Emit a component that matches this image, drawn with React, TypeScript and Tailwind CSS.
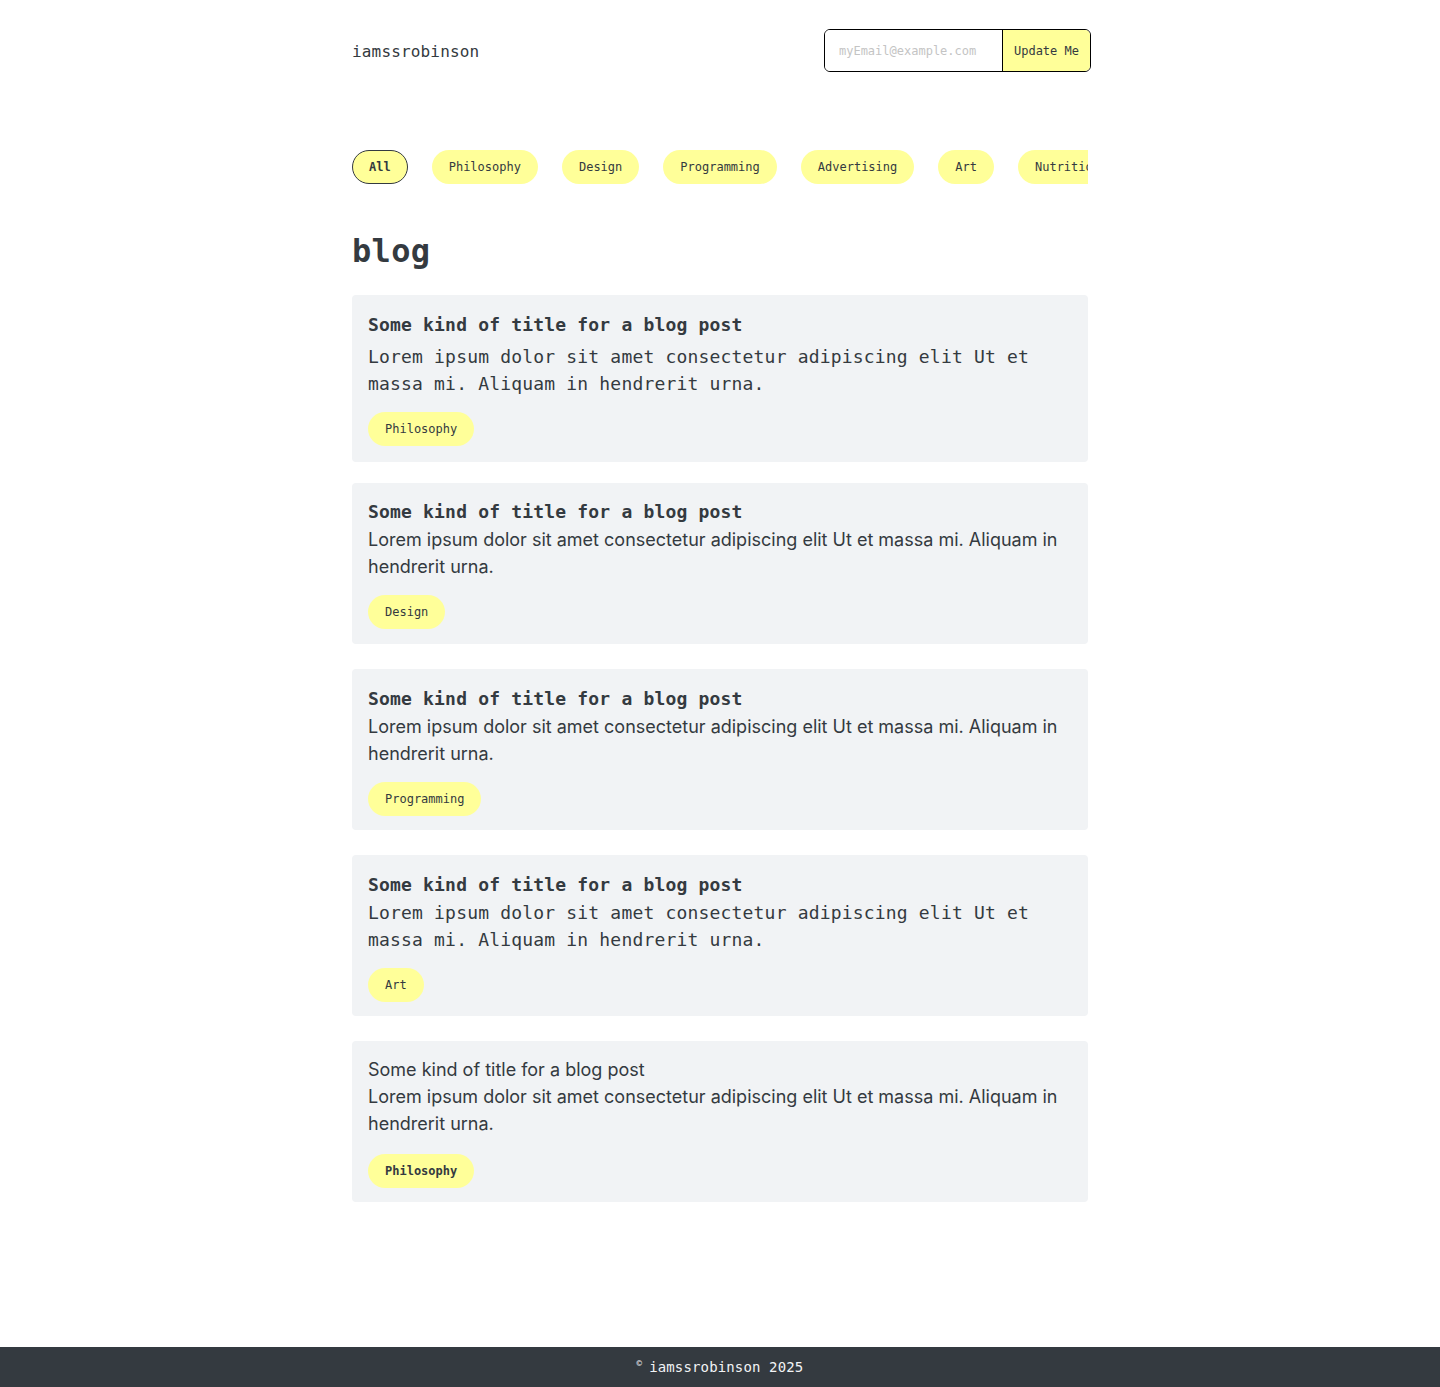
import React from 'react';

const mono = 'font-["DejaVu_Sans_Mono","Liberation_Mono",monospace] tracking-[0.01em]';
const monoTight = 'font-["DejaVu_Sans_Mono","Liberation_Mono",monospace]';
const inter = 'font-["Inter","Noto_Sans",sans-serif]';

const categories = ['All', 'Philosophy', 'Design', 'Programming', 'Advertising', 'Art', 'Nutrition'];

type Post = {
  tag: string;
  card: string;
  title: string;
  body: string;
  tagWrap: string;
  tagBold?: boolean;
};

const posts: Post[] = [
  {
    tag: 'Philosophy',
    card: 'pt-4 pb-4',
    title: `${mono} text-lg leading-7 font-bold`,
    body: `${mono} text-lg leading-[27px] mt-1`,
    tagWrap: 'mt-[15px]',
  },
  {
    tag: 'Design',
    card: 'mt-[21px] pt-[15px] pb-[15px]',
    title: `${mono} text-lg leading-7 font-bold`,
    body: `${inter} text-lg leading-[27px]`,
    tagWrap: 'mt-[15px]',
  },
  {
    tag: 'Programming',
    card: 'mt-[25px] pt-4 pb-[14px]',
    title: `${mono} text-lg leading-7 font-bold`,
    body: `${inter} text-lg leading-[27px]`,
    tagWrap: 'mt-[15px]',
  },
  {
    tag: 'Art',
    card: 'mt-[25px] pt-4 pb-[14px]',
    title: `${mono} text-lg leading-7 font-bold`,
    body: `${mono} text-lg leading-[27px]`,
    tagWrap: 'mt-[15px]',
  },
  {
    tag: 'Philosophy',
    card: 'mt-[25px] pt-[15px] pb-[14px]',
    title: `${inter} text-lg leading-[27px]`,
    body: `${inter} text-lg leading-[27px]`,
    tagWrap: 'mt-[17px]',
    tagBold: true,
  },
];

function Pill({ label, active, bold }: { label: string; active?: boolean; bold?: boolean }) {
  return (
    <span
      className={`shrink-0 inline-flex items-center rounded-full border px-4 py-2 text-xs leading-4 bg-[#ffff99] ${monoTight} ${
        active ? 'border-[#343a40] font-bold' : 'border-transparent'
      } ${bold ? 'font-bold' : ''}`}
    >
      {label}
    </span>
  );
}

function PostCard({ post }: { post: Post }) {
  return (
    <div className={`rounded-sm bg-[#f1f3f5] px-4 ${post.card}`}>
      <h2 className={post.title}>Some kind of title for a blog post</h2>
      <p className={post.body}>
        Lorem ipsum dolor sit amet consectetur adipiscing elit Ut et massa mi. Aliquam in hendrerit urna.
      </p>
      <div className={`flex ${post.tagWrap}`}>
        <Pill label={post.tag} bold={post.tagBold} />
      </div>
    </div>
  );
}

export default function App() {
  return (
    <div className="min-h-screen flex flex-col bg-white text-[#343a40]">
      <main className="flex-1 w-full max-w-3xl mx-auto px-4 pb-10">
        <header className="flex items-center justify-between pt-[29px] -mr-[3px]">
          <span className={`${mono} text-base mt-[3px]`}>iamssrobinson</span>
          <form className="flex h-[43px] rounded-md border border-black overflow-hidden" onSubmit={e => e.preventDefault()}>
            <input
              className={`${monoTight} w-[177px] px-[14px] text-xs outline-none placeholder:text-[#c4c4c4] bg-white`}
              placeholder="myEmail@example.com"
            />
            <button type="submit" className={`${monoTight} border-l border-black bg-[#ffff99] px-[11px] text-xs`}>
              Update Me
            </button>
          </form>
        </header>

        <nav className="mt-[78px] flex gap-6 overflow-hidden">
          {categories.map((c, i) => (
            <Pill key={c} label={c} active={i === 0} />
          ))}
        </nav>

        <h1 className={`${mono} mt-[47px] mb-[24px] text-[32px] leading-10 font-bold`}>blog</h1>

        <div className="flex flex-col">
          {posts.map((p, i) => (
            <PostCard key={i} post={p} />
          ))}
        </div>
      </main>

      <footer className={`h-10 bg-[#343a40] text-[#f1f3f5] flex items-center justify-center text-sm ${mono}`}>
        <span className="text-[9px] self-start mt-[12px] mr-[7px] leading-none">©</span>
        <span>iamssrobinson 2025</span>
      </footer>
    </div>
  );
}
